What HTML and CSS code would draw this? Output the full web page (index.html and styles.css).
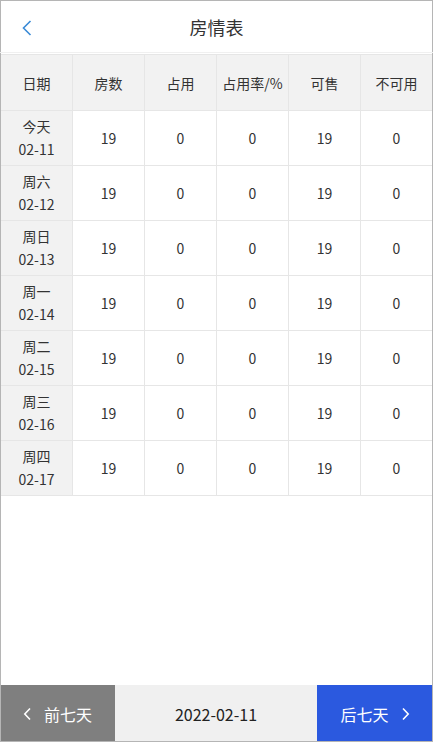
FILE: index.html
```html
<!DOCTYPE html>
<html lang="zh">
<head>
<meta charset="utf-8">
<link rel="stylesheet" href="styles.css">
</head>
<body>
<div class="page">
  <header class="topbar">
    <span class="back"><svg width="12" height="18" viewBox="0 0 12 18"><path d="M9.5 2 L2.5 9 L9.5 16" fill="none" stroke="#3a8ad6" stroke-width="1.6"/></svg></span>
    <h1 class="title">房情表</h1>
  </header>
  <main class="content">
    <table class="grid">
      <thead>
        <tr><th>日期</th><th>房数</th><th>占用</th><th>占用率/%</th><th>可售</th><th>不可用</th></tr>
      </thead>
      <tbody>
        <tr><td class="date">今天<br>02-11</td><td>19</td><td>0</td><td>0</td><td>19</td><td>0</td></tr>
        <tr><td class="date">周六<br>02-12</td><td>19</td><td>0</td><td>0</td><td>19</td><td>0</td></tr>
        <tr><td class="date">周日<br>02-13</td><td>19</td><td>0</td><td>0</td><td>19</td><td>0</td></tr>
        <tr><td class="date">周一<br>02-14</td><td>19</td><td>0</td><td>0</td><td>19</td><td>0</td></tr>
        <tr><td class="date">周二<br>02-15</td><td>19</td><td>0</td><td>0</td><td>19</td><td>0</td></tr>
        <tr><td class="date">周三<br>02-16</td><td>19</td><td>0</td><td>0</td><td>19</td><td>0</td></tr>
        <tr><td class="date">周四<br>02-17</td><td>19</td><td>0</td><td>0</td><td>19</td><td>0</td></tr>
      </tbody>
    </table>
  </main>
  <footer class="bottombar">
    <div class="btn prev"><svg width="9" height="14" viewBox="0 0 9 14"><path d="M7 1.5 L1.8 7 L7 12.5" fill="none" stroke="#fff" stroke-width="1.6"/></svg><span>前七天</span></div>
    <div class="current">2022-02-11</div>
    <div class="btn next"><span>后七天</span><svg width="9" height="14" viewBox="0 0 9 14"><path d="M2 1.5 L7.2 7 L2 12.5" fill="none" stroke="#fff" stroke-width="1.6"/></svg></div>
  </footer>
</div>
</body>
</html>
```
FILE: styles.css
```css
* { box-sizing: border-box; }
html, body { margin: 0; padding: 0; background: #fff; }
body {
  font-family: "Noto Sans CJK SC", "Noto Sans", sans-serif;
  color: #333;
}
.page {
  width: 433px;
  height: 742px;
  outline: 1px solid #b5b5b5;
  outline-offset: -1px;
  border-top: 1px solid #666;
  display: flex;
  flex-direction: column;
  overflow: hidden;
}
.topbar {
  height: 52px;
  flex: none;
  display: flex;
  align-items: center;
  justify-content: center;
  position: relative;
  border-bottom: 1px solid #f0f0f0;
}
.back {
  position: absolute;
  left: 21px;
  top: 18px;
  display: flex;
}
.title {
  margin: 0;
  font-size: 18px;
  font-weight: 400;
  color: #333;
  line-height: 1;
}
.content {
  flex: 1;
  padding: 1px 0 0 0;
}
.grid {
  border-collapse: collapse;
  width: 432px;
  table-layout: fixed;
}
.grid th, .grid td {
  border: 1px solid #e6e6e6;
  text-align: center;
  vertical-align: middle;
  font-size: 14px;
  font-weight: 400;
  color: #333;
  width: 72px;
  padding: 0;
}
.grid th {
  height: 56px;
  background: #f2f2f2;
}
.grid td {
  height: 55px;
  line-height: 23px;
}
.grid td.date {
  background: #f2f2f2;
}
.bottombar {
  height: 57px;
  flex: none;
  display: flex;
  font-size: 16px;
}
.btn {
  width: 115px;
  display: flex;
  align-items: center;
  justify-content: center;
  gap: 12px;
  color: #fff;
}
.prev { background: #7f7f7f; }
.next { background: #2b59df; border-radius: 0 0 3px 0; width: 116px; }
.current {
  flex: 1;
  background: #f0f0f0;
  display: flex;
  align-items: center;
  justify-content: center;
  color: #222;
}
```
